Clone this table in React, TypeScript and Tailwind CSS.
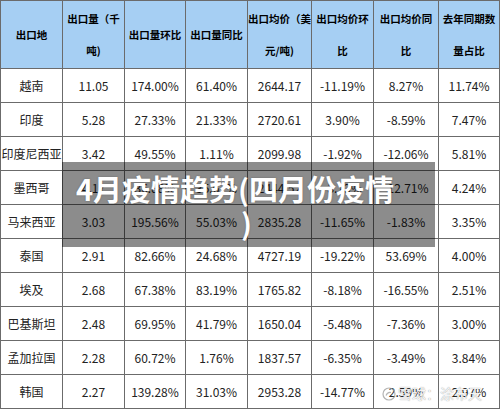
const headers: string[][] = [
  ["出口地"],
  ["出口量（千", "吨)"],
  ["出口量环比"],
  ["出口量同比"],
  ["出口均价（美", "元/吨)"],
  ["出口均价环", "比"],
  ["出口均价同", "比"],
  ["去年同期数", "量占比"],
];

const widths = ["w-[62px]", "w-[62px]", "w-[61px]", "w-[62px]", "w-[64px]", "w-[62px]", "w-[65px]", "w-[61px]"];

const rows: string[][] = [
  ["越南", "11.05", "174.00%", "61.40%", "2644.17", "-11.19%", "8.27%", "11.74%"],
  ["印度", "5.28", "27.33%", "21.33%", "2720.61", "3.90%", "-8.59%", "7.47%"],
  ["印度尼西亚", "3.42", "49.55%", "1.11%", "2099.98", "-1.92%", "-12.06%", "5.81%"],
  ["墨西哥", "4.17", "36.88%", "35.62%", "2444.52", "-3.73%", "-12.71%", "4.24%"],
  ["马来西亚", "3.03", "195.56%", "55.03%", "2835.28", "-11.65%", "-1.83%", "3.35%"],
  ["泰国", "2.91", "82.66%", "24.68%", "4727.19", "-19.22%", "53.69%", "4.00%"],
  ["埃及", "2.68", "67.38%", "83.19%", "1765.82", "-8.18%", "-16.55%", "2.51%"],
  ["巴基斯坦", "2.48", "69.95%", "41.79%", "1650.04", "-5.48%", "-7.36%", "3.00%"],
  ["孟加拉国", "2.28", "60.72%", "1.76%", "1837.57", "-6.35%", "-3.49%", "3.84%"],
  ["韩国", "2.27", "139.28%", "31.03%", "2953.28", "-14.77%", "2.59%", "2.97%"],
];

const App = () => {
  return (
    <div
      className="relative w-[500px] h-[410px] overflow-hidden bg-white"
      style={{ fontFamily: '"Noto Sans CJK SC", "Noto Sans", sans-serif' }}
    >
      <table className="table-fixed border-collapse w-[499px] border border-[#6b6b6b]">
        <thead>
          <tr className="h-[68px] bg-[#a6cff3]">
            {headers.map((h, i) => (
              <th
                key={i}
                className={`${widths[i]} border border-[#6b6b6b] p-0 text-center align-middle text-[10.5px] font-bold leading-[32px] text-black whitespace-nowrap`}
              >
                {h.map((line, j) => (
                  <div key={j}>{line}</div>
                ))}
              </th>
            ))}
          </tr>
        </thead>
        <tbody>
          {rows.map((r) => (
            <tr key={r[0]} className="h-[34px]">
              {r.map((c, i) => (
                <td
                  key={i}
                  className="border border-[#6b6b6b] p-0 text-center align-middle text-[12px] text-[#222] whitespace-nowrap"
                >
                  {c}
                </td>
              ))}
            </tr>
          ))}
        </tbody>
      </table>

      {/* title banner over the table */}
      <div className="absolute left-[62px] top-[162px] w-[373px] h-[85px] bg-black/45 pl-[14px] pt-[9px]">
        <div className="text-[29px] font-bold leading-[34px] text-white whitespace-nowrap [text-shadow:0_0_2px_rgba(0,0,0,0.25)]">
          <div>4月疫情趋势(四月份疫情</div>
          <div className="pl-[165px]">)</div>
        </div>
      </div>

      {/* watermark */}
      <div className="absolute left-[382px] top-[383px] flex items-center gap-[2px] text-[14px] text-white/90 [text-shadow:0_0_1px_rgba(0,0,0,0.5)]">
        <svg width="14" height="14" viewBox="0 0 14 14" fill="none">
          <circle cx="7" cy="7" r="6" stroke="rgba(160,160,160,0.8)" strokeWidth="1.2" />
          <path d="M4 8.5c1-2.5 3-3.5 5-3" stroke="rgba(160,160,160,0.8)" strokeWidth="1.2" />
        </svg>
        <span>雪球：涂布天</span>
      </div>
    </div>
  );
};

export default App;
